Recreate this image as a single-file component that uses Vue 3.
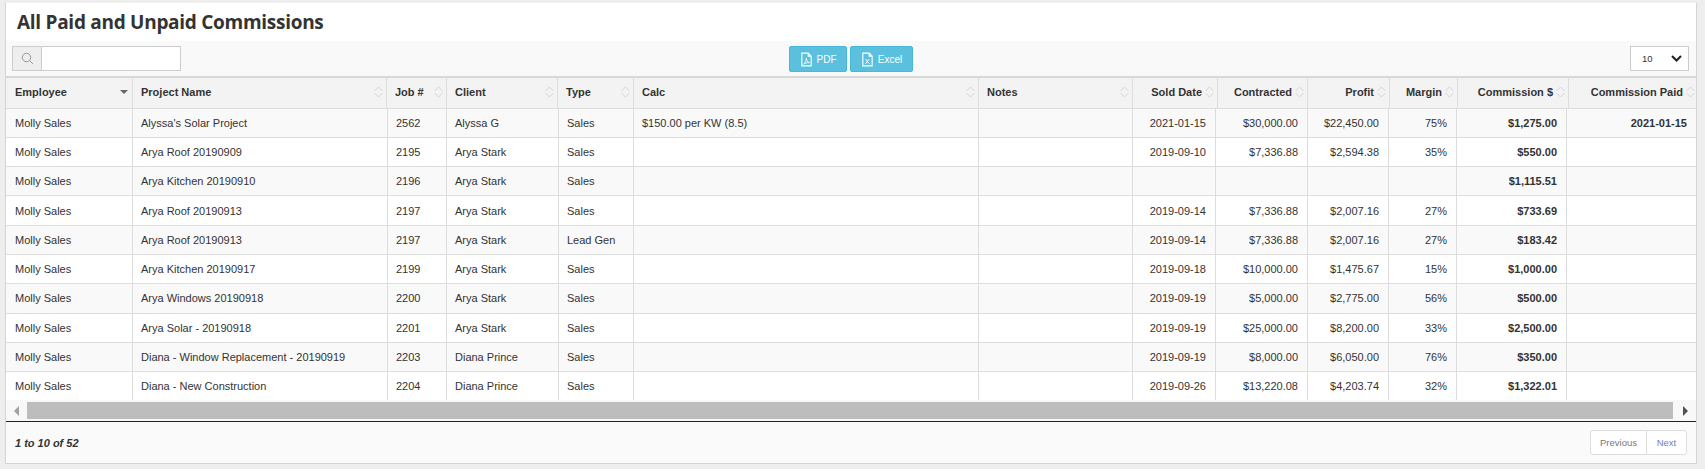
<script setup>
const headEdges = [6,133,387,447,558,634,979,1133,1218,1308,1390,1458,1569,1699]
const bodyEdges = [6,133,388,447,559,634,979,1133,1216,1308,1389,1457,1567,1697]
const widths = e => e.slice(1).map((v, i) => v - e[i])
const headCols = widths(headEdges)
const bodyCols = widths(bodyEdges)
const heads = [
  { t: 'Employee', sort: 'desc' }, { t: 'Project Name' }, { t: 'Job #' }, { t: 'Client' }, { t: 'Type' },
  { t: 'Calc' }, { t: 'Notes' }, { t: 'Sold Date', r: 1 }, { t: 'Contracted', r: 1 }, { t: 'Profit', r: 1 },
  { t: 'Margin', r: 1 }, { t: 'Commission $', r: 1 }, { t: 'Commission Paid', r: 1 }
]
const rows = [
  ['Molly Sales', "Alyssa's Solar Project", '2562', 'Alyssa G', 'Sales', '$150.00 per KW (8.5)', '', '2021-01-15', '$30,000.00', '$22,450.00', '75%', '$1,275.00', '2021-01-15'],
  ['Molly Sales', 'Arya Roof 20190909', '2195', 'Arya Stark', 'Sales', '', '', '2019-09-10', '$7,336.88', '$2,594.38', '35%', '$550.00', ''],
  ['Molly Sales', 'Arya Kitchen 20190910', '2196', 'Arya Stark', 'Sales', '', '', '', '', '', '', '$1,115.51', ''],
  ['Molly Sales', 'Arya Roof 20190913', '2197', 'Arya Stark', 'Sales', '', '', '2019-09-14', '$7,336.88', '$2,007.16', '27%', '$733.69', ''],
  ['Molly Sales', 'Arya Roof 20190913', '2197', 'Arya Stark', 'Lead Gen', '', '', '2019-09-14', '$7,336.88', '$2,007.16', '27%', '$183.42', ''],
  ['Molly Sales', 'Arya Kitchen 20190917', '2199', 'Arya Stark', 'Sales', '', '', '2019-09-18', '$10,000.00', '$1,475.67', '15%', '$1,000.00', ''],
  ['Molly Sales', 'Arya Windows 20190918', '2200', 'Arya Stark', 'Sales', '', '', '2019-09-19', '$5,000.00', '$2,775.00', '56%', '$500.00', ''],
  ['Molly Sales', 'Arya Solar - 20190918', '2201', 'Arya Stark', 'Sales', '', '', '2019-09-19', '$25,000.00', '$8,200.00', '33%', '$2,500.00', ''],
  ['Molly Sales', 'Diana - Window Replacement - 20190919', '2203', 'Diana Prince', 'Sales', '', '', '2019-09-19', '$8,000.00', '$6,050.00', '76%', '$350.00', ''],
  ['Molly Sales', 'Diana - New Construction', '2204', 'Diana Prince', 'Sales', '', '', '2019-09-26', '$13,220.08', '$4,203.74', '32%', '$1,322.01', '']
]
</script>

<template>
  <div class="page">
    <div class="panel">
      <h1 class="title">All Paid and Unpaid Commissions</h1>
      <div class="toolbar">
        <div class="search">
          <span class="search-addon">
            <svg width="13" height="13" viewBox="0 0 13 13" fill="none" stroke="#999" stroke-width="1">
              <circle cx="5.5" cy="5.5" r="4.2" />
              <path d="M8.6 8.6 12 12" />
            </svg>
          </span>
          <span class="search-input"></span>
        </div>
        <div class="buttons">
          <button class="btn btn-pdf">
            <svg width="11" height="15" viewBox="0 0 13 17" fill="none" stroke="#fff" stroke-width="1.3">
              <path d="M1 1h7.5L12 4.5V16H1z" />
              <path d="M8.5 1v3.5H12" />
              <path d="M3 14c2-1 3.5-4 3.2-7 .4 3 1.600 4.600 3.800 5.200-3-.2-5 .4-7 1.800z" stroke-width="1" />
            </svg>
            <span>PDF</span>
          </button>
          <button class="btn btn-excel">
            <svg width="11" height="15" viewBox="0 0 13 17" fill="none" stroke="#fff" stroke-width="1.3">
              <path d="M1 1h7.5L12 4.5V16H1z" />
              <path d="M8.5 1v3.5H12" />
              <path d="M4.200 8l4.200 5.500M8.400 8l-4.200 5.500" stroke-width="1.100" />
            </svg>
            <span>Excel</span>
          </button>
        </div>
        <div class="length">
          <span>10</span>
          <svg width="11" height="7" viewBox="0 0 11 7" fill="none" stroke="#222" stroke-width="2">
            <path d="M1 1l4.500 4.500L10 1" />
          </svg>
        </div>
      </div>

      <div class="grid">
        <table class="head-table">
          <colgroup>
            <col v-for="(w, i) in headCols" :key="i" :style="{ width: w + 'px' }" />
          </colgroup>
          <thead>
            <tr>
              <th v-for="h in heads" :key="h.t" :class="{ right: h.r }">
                <span class="th-inner">
                  <span class="th-label">{{ h.t }}</span>
                  <svg v-if="h.sort" class="sort-icon sort-desc" width="8" height="4" viewBox="0 0 8 4">
                    <path d="M0 0h8L4 4z" fill="#666" />
                  </svg>
                  <svg v-else class="sort-icon" width="9" height="12" viewBox="0 0 9 12" fill="none" stroke="#d4d4d4" stroke-width="1">
                    <path d="M.5 5l4-4 4 4M.5 7l4 4 4-4" />
                  </svg>
                </span>
              </th>
            </tr>
          </thead>
        </table>
        <table class="body-table">
          <colgroup>
            <col v-for="(w, i) in bodyCols" :key="i" :style="{ width: w + 'px' }" />
          </colgroup>
          <tbody>
            <tr v-for="(row, ri) in rows" :key="ri" :class="{ odd: ri % 2 === 0 }">
              <td v-for="(c, ci) in row" :key="ci" :class="{ right: ci >= 7, strong: ci >= 11 }">{{ c }}</td>
            </tr>
          </tbody>
        </table>
        <div class="scrollbar">
          <span class="arrow-left"></span>
          <span class="thumb"></span>
          <span class="arrow-right"></span>
        </div>
      </div>

      <div class="footer">
        <span class="info">1 to 10 of 52</span>
        <div class="pager">
          <span class="page-btn prev">Previous</span>
          <span class="page-btn next">Next</span>
        </div>
      </div>
    </div>
  </div>
</template>

<style>
html, body { margin: 0; background: #eeeeee; }
</style>

<style scoped>
.page {
  width: 1705px;
  height: 469px;
  box-sizing: border-box;
  padding: 3px 8px 5px 5px;
  background: #eeeeee;
  font-family: "Liberation Sans", Arial, sans-serif;
  font-size: 11px;
  color: #333;
  overflow: hidden;
}
.panel {
  width: 1692px;
  height: 461px;
  box-sizing: border-box;
  background: #fff;
  border-left: 1px solid #d4d4d4;
  border-right: 1px solid #d4d4d4;
  border-bottom: 1px solid #d4d4d4;
  display: flex;
  flex-direction: column;
}
.title {
  margin: 0;
  height: 38px;
  padding: 0 0 0 11px;
  font-family: "Open Sans", sans-serif;
  font-size: 19px;
  font-weight: 700;
  line-height: 38px;
  color: #333;
  letter-spacing: -0.28px;
}
.toolbar {
  height: 35px;
  box-sizing: border-box;
  padding: 5px 7px 0 6px;
  background: #f9f9f9;
  display: grid;
  grid-template-columns: 1fr auto 1fr;
  align-items: start;
}
.search {
  width: 169px;
  height: 25px;
  box-sizing: border-box;
  border: 1px solid #ccc;
  display: flex;
  background: #fff;
}
.search-addon {
  width: 28px;
  background: #eee;
  border-right: 1px solid #ccc;
  display: flex;
  align-items: center;
  justify-content: center;
}
.search-input { flex: 1; }
.buttons {
  display: flex;
  gap: 3px;
}
.btn {
  height: 26px;
  padding: 0 0 0 2px;
  border: 1px solid #46b8da;
  border-radius: 2px;
  background: #5bc0de;
  color: #fff;
  font-family: "Liberation Sans", Arial, sans-serif;
  font-size: 10px;
  display: flex;
  align-items: center;
  justify-content: center;
  gap: 5px;
}
.btn-pdf { width: 58px; }
.btn-excel { width: 63px; }
.length {
  justify-self: end;
  width: 59px;
  height: 25px;
  box-sizing: border-box;
  border: 1px solid #ccc;
  background: #fff;
  font-size: 9.5px;
  display: flex;
  align-items: center;
  justify-content: space-between;
  padding: 0 6px 0 11px;
}
.grid {
  flex: none;
  width: 1690px;
  overflow: hidden;
  background: #fff;
  border-bottom: 1px solid #222;
}
table {
  table-layout: fixed;
  border-collapse: separate;
  border-spacing: 0;
}
.head-table { width: 1693px; }
.body-table { width: 1691px; }
.head-table th {
  height: 31.5px;
  box-sizing: border-box;
  padding: 0 3px 2px 8px;
  background: #f3f3f3;
  border-top: 2px solid #d8d8d8;
  border-right: 1px solid #ddd;
  font-size: 11px;
  font-weight: 700;
  text-align: left;
  color: #333;
}
.head-table th:first-child { padding-left: 9px; }
.th-inner {
  display: flex;
  align-items: center;
  justify-content: space-between;
  gap: 3px;
  white-space: nowrap;
}
.head-table th.right .th-inner { justify-content: flex-end; }
.sort-icon { flex: none; }
.sort-desc { margin-right: 1px; }
.body-table td {
  height: 29.3px;
  box-sizing: border-box;
  padding: 0 9px 0 8px;
  border-right: 1px solid #ddd;
  border-top: 1px solid #ddd;
  background: #fff;
  color: #333;
  font-size: 11px;
  white-space: nowrap;
  overflow: hidden;
}
.body-table td:first-child { padding-left: 9px; }
.body-table tr.odd td { background: #f9f9f9; }
.body-table td.right { text-align: right; }
.body-table td.strong { font-weight: 700; }
.scrollbar {
  height: 21px;
  box-sizing: border-box;
  padding: 2px 0;
  background: #f8f8f8;
  display: flex;
  align-items: stretch;
}
.arrow-left, .arrow-right {
  flex: none;
  width: 0;
  height: 0;
  align-self: center;
  border-top: 5px solid transparent;
  border-bottom: 5px solid transparent;
}
.arrow-left {
  margin: 0 8px;
  border-right: 5px solid #a0a0a0;
}
.thumb {
  flex: 1;
  background: #bdbdbd;
}
.arrow-right {
  margin: 0 8px 0 10px;
  border-left: 5px solid #505050;
}
.footer {
  flex: 1;
  background: #fafafa;
  display: flex;
  align-items: center;
  justify-content: space-between;
  padding: 0 9px 0 9px;
}
.info {
  font-style: italic;
  font-weight: 700;
  font-size: 11px;
  color: #333;
}
.pager {
  display: flex;
  height: 25px;
  box-sizing: border-box;
  border: 1px solid #ddd;
  border-radius: 3px;
  background: #fff;
  font-size: 9.5px;
}
.page-btn {
  display: flex;
  align-items: center;
  justify-content: center;
}
.prev { width: 55px; color: #777; border-right: 1px solid #ddd; }
.next { width: 39px; color: #6f7fb5; }
</style>
